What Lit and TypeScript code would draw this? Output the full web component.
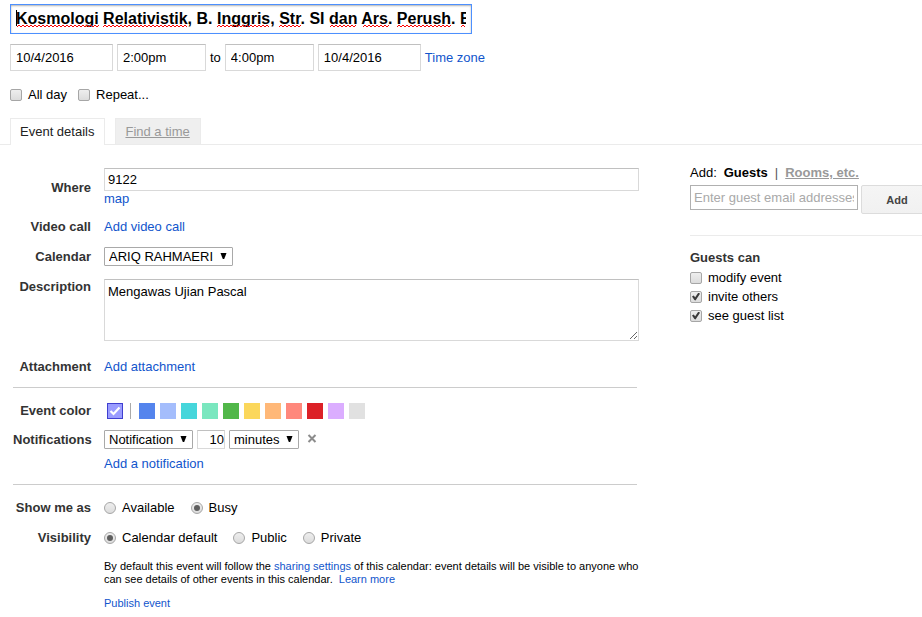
import { LitElement, html, css, svg } from "lit";
import { customElement, property } from "lit/decorators.js";
import { styleMap } from "lit/directives/style-map.js";

const colors = [
  ["Bold blue", "#5484ed"],
  ["Blue", "#a4bdfc"],
  ["Turquoise", "#46d6db"],
  ["Green", "#7ae7bf"],
  ["Bold green", "#51b749"],
  ["Yellow", "#fbd75b"],
  ["Orange", "#ffb878"],
  ["Red", "#ff887c"],
  ["Bold red", "#dc2127"],
  ["Purple", "#dbadff"],
  ["Gray", "#e1e1e1"],
];

/* Start and end of each misspelt word, measured from the start of the title. */
const misspelt = [
  [1, 83], [87, 172], [201, 253], [263, 285],
  [314, 341], [347, 373], [381, 436], [445, 450],
];

const squiggle = (from: number, to: number) => {
  let d = `M${from} 17`;
  for (let x = from + 2, up = true; x <= to; x += 2, up = !up) d += `L${x} ${up ? 15 : 17}`;
  return svg`<path d=${d} fill="none" stroke="#f00" stroke-width="1" />`;
};

const shared = css`
  * { box-sizing: border-box; }
  input, select, textarea, button {
    font: inherit;
    color: #000;
    margin: 0;
  }
  a { color: #15c; text-decoration: none; }
`;

@customElement("drop-down")
class DropDown extends LitElement {
  @property() name = "";
  @property({ type: Array }) options: string[] = [];

  static styles = [shared, css`
    :host { display: inline-grid; align-items: center; }
    .list {
      grid-area: 1 / 1;
      appearance: none;
      width: 100%;
      height: 19px;
      padding: 0 4px;
      border: 1px solid #a9a9a9;
      border-radius: 1px;
      background: #fff;
    }
    .arrow {
      grid-area: 1 / 1;
      justify-self: end;
      margin-right: 6px;
      pointer-events: none;
    }
  `];

  render() {
    return html`
      <select class="list" aria-label=${this.name}>
        ${this.options.map((o) => html`<option>${o}</option>`)}
      </select>
      <svg class="arrow" width="7" height="7" viewBox="0 0 7 7">
        <path d="M0.5 0H6.5L4.2 6H2.8Z" fill="#000" />
      </svg>
    `;
  }
}

@customElement("app-root")
class AppRoot extends LitElement {
  static styles = [shared, css`
    :host {
      display: block;
      overflow: hidden;
      padding: 4px 0 8px;
      background: #fff;
      color: #000;
      font: 13px/16px "Liberation Sans", Arial, sans-serif;
    }
    .title {
      position: relative;
      width: 462px;
      max-width: 100%;
      margin-left: 10px;
    }
    .title-box {
      display: block;
      width: 100%;
      height: 30px;
      padding: 0 5px;
      border: 1px solid #4d90fe;
      box-shadow: inset 0 1px 2px rgba(0, 0, 0, 0.3);
      font-size: 16px;
      font-weight: bold;
      outline: none;
    }
    .marks {
      position: absolute;
      left: 6px;
      top: 6px;
      pointer-events: none;
    }
    .when {
      display: flex;
      align-items: center;
      gap: 4px;
      margin: 10px 10px 0;
    }
    .box {
      border: 1px solid #d9d9d9;
      border-top-color: #c0c0c0;
      background: #fff;
    }
    .date, .time { height: 27px; padding: 0 5px; }
    .date { width: 103px; }
    .time { width: 89px; }
    .repeat { display: flex; gap: 11px; margin: 16px 10px 0; }
    .choice { display: flex; align-items: center; gap: 6px; }
    .tick, .radio {
      appearance: none;
      position: relative;
      flex: none;
      width: 12px;
      height: 12px;
      border: 1px solid #a6a6a6;
      background: linear-gradient(#eee, #dcdcdc);
    }
    .tick { border-radius: 2px; }
    .radio { border-radius: 50%; }
    .tick:checked::after {
      content: "";
      position: absolute;
      inset: 1px;
      background: #3a3a3a;
      clip-path: polygon(0 50%, 20% 38%, 40% 58%, 80% 0, 100% 16%, 44% 100%, 30% 94%);
    }
    .radio:checked::after {
      content: "";
      position: absolute;
      inset: 2px;
      border-radius: 50%;
      background: #5e5e5e;
    }
    .tabs {
      display: flex;
      gap: 10px;
      margin-top: 15px;
      padding-left: 10px;
      border-bottom: 1px solid #ebebeb;
    }
    .tab {
      height: 26px;
      padding: 5px 10px 5px 9px;
      border: 1px solid #ebebeb;
      border-bottom: 0;
      background: #efefef;
      color: #999;
      text-decoration: underline;
    }
    .tab.current {
      height: 27px;
      margin-bottom: -1px;
      background: #fff;
      color: #222;
      text-decoration: none;
    }
    .body {
      display: grid;
      grid-template-columns: minmax(0, 1fr) 232px;
      gap: 51px;
      padding-left: 13px;
    }
    .details { padding-top: 23px; }
    .row {
      display: grid;
      grid-template-columns: 78px minmax(0, 1fr);
      column-gap: 13px;
      align-items: center;
      margin-bottom: 12px;
    }
    .row.top { align-items: start; }
    .row.tight { margin-bottom: 7px; }
    .row.wide { margin-bottom: 18px; }
    .row.loose { margin-bottom: 14px; }
    .row.pick { margin-bottom: 13px; }
    .row.colors { margin-bottom: 11px; }
    .row.none { margin-bottom: 0; }
    .name {
      color: #333;
      font-weight: bold;
      text-align: right;
      white-space: nowrap;
    }
    .rule {
      height: 1px;
      margin: 0 2px 15px 0;
      border: 0;
      background: #ccc;
    }
    .where { display: block; width: 100%; height: 23px; padding: 0 3px; }
    .calendar { width: 129px; }
    .description {
      display: block;
      width: 100%;
      height: 62px;
      padding: 4px 3px;
      resize: vertical;
      outline: none;
    }
    .swatches { display: flex; gap: 5px; padding-left: 3px; }
    .swatch { appearance: none; width: 16px; height: 16px; }
    .own { position: relative; display: grid; }
    .own .swatch { grid-area: 1 / 1; border: 1px solid #3f3fd0; background: #9a9cff; }
    .own svg { grid-area: 1 / 1; z-index: 1; pointer-events: none; }
    .split { width: 1px; margin: 0 3px 0 2px; background: #aaa; }
    .alerts { display: flex; align-items: center; gap: 4px; }
    .kind { width: 89px; }
    .unit { width: 70px; }
    .amount { width: 28px; height: 19px; padding: 0; text-align: right; }
    .remove {
      display: grid;
      width: 18px;
      height: 18px;
      padding: 3px 4px;
      border: 0;
      background: none;
    }
    .radios { display: flex; gap: 16px; }
    .note { margin: 0 0 11px; font-size: 11px; line-height: 13px; }
    .publish { display: block; font-size: 11px; line-height: 13px; }
    .more { margin-left: 3px; }
    .guests { padding-top: 20px; }
    .kinds { display: flex; gap: 7px; white-space: nowrap; }
    .rooms { color: #999; font-weight: bold; text-decoration: underline; }
    .bar { color: #555; }
    .invite { display: flex; align-items: start; gap: 3px; margin-top: 4px; }
    .email {
      flex: none;
      width: 168px;
      height: 25px;
      padding: 0 3px;
      border: 1px solid #b0b0b0;
    }
    .email::placeholder { color: #a9a9a9; opacity: 1; }
    .add {
      flex: none;
      width: 72px;
      height: 29px;
      border: 1px solid #dcdcdc;
      border-radius: 2px;
      background: linear-gradient(#f5f5f5, #f1f1f1);
      color: #444;
      font-size: 11px;
      font-weight: bold;
    }
    .thin { height: 1px; margin: 21px 0 14px; border: 0; background: #ebebeb; }
    .rights { margin: 0; padding: 0; border: 0; }
    .legend { padding: 0; margin-bottom: 2px; color: #333; font-weight: bold; }
    .rights .choice { height: 19px; }
  `];

  tick(text: string, checked = false) {
    return html`<label class="choice"><input class="tick" type="checkbox" .checked=${checked} />${text}</label>`;
  }

  radio(group: string, text: string, checked = false) {
    return html`<label class="choice"><input class="radio" type="radio" name=${group} .checked=${checked} />${text}</label>`;
  }

  render() {
    return html`
      <div class="title">
        <input class="title-box" type="text" aria-label="Title" spellcheck="false"
          value="Kosmologi Relativistik, B. Inggris, Str. SI dan Ars. Perush. Bisnis" />
        <svg class="marks" width="450" height="20" aria-hidden="true">
          <path d="M0.5 0V16" stroke="#000" />
          ${misspelt.map(([from, to]) => squiggle(from, to))}
        </svg>
      </div>
      <div class="when">
        <input class="box date" type="text" aria-label="Start date" value="10/4/2016" />
        <input class="box time" type="text" aria-label="Start time" value="2:00pm" />
        <span>to</span>
        <input class="box time" type="text" aria-label="End time" value="4:00pm" />
        <input class="box date" type="text" aria-label="End date" value="10/4/2016" />
        <a href="#">Time zone</a>
      </div>
      <div class="repeat">${this.tick("All day")}${this.tick("Repeat...")}</div>
      <nav class="tabs">
        <a class="tab current" href="#">Event details</a>
        <a class="tab" href="#">Find a time</a>
      </nav>
      <div class="body">
        <main class="details">
          <div class="row">
            <label class="name" for="where">Where</label>
            <div>
              <input class="box where" id="where" type="text" value="9122" />
              <a href="#">map</a>
            </div>
          </div>
          <div class="row">
            <span class="name">Video call</span>
            <a href="#">Add video call</a>
          </div>
          <div class="row pick">
            <span class="name">Calendar</span>
            <drop-down class="calendar" name="Calendar" .options=${["ARIQ RAHMAERI"]}></drop-down>
          </div>
          <div class="row top wide">
            <label class="name" for="description">Description</label>
            <textarea class="box description" id="description" .value=${"Mengawas Ujian Pascal"}></textarea>
          </div>
          <div class="row">
            <span class="name">Attachment</span>
            <a href="#">Add attachment</a>
          </div>
          <hr class="rule" />
          <div class="row colors">
            <span class="name">Event color</span>
            <div class="swatches">
              <div class="own">
                <input class="swatch" type="radio" name="color" aria-label="Calendar color" checked />
                <svg width="16" height="16" viewBox="0 0 16 16">
                  <path d="M3.5 8L6.5 11L12.5 4.5" fill="none" stroke="#fff" stroke-width="2.2" />
                </svg>
              </div>
              <span class="split"></span>
              ${colors.map(([name, value]) => html`
                <input class="swatch" type="radio" name="color" aria-label=${name}
                  style=${styleMap({ background: value })} />`)}
            </div>
          </div>
          <div class="row tight">
            <span class="name">Notifications</span>
            <div class="alerts">
              <drop-down class="kind" name="Kind" .options=${["Notification", "Email"]}></drop-down>
              <input class="box amount" type="text" aria-label="Amount" value="10" />
              <drop-down class="unit" name="Unit" .options=${["minutes", "hours", "days"]}></drop-down>
              <button class="remove" aria-label="Remove notification">
                <svg width="10" height="10" viewBox="0 0 10 10">
                  <path d="M1.5 1L8.5 8M8.5 1L1.5 8" stroke="#8c8c8c" stroke-width="2" />
                </svg>
              </button>
            </div>
          </div>
          <div class="row">
            <span></span>
            <a href="#">Add a notification</a>
          </div>
          <hr class="rule" />
          <div class="row loose">
            <span class="name">Show me as</span>
            <div class="radios" role="radiogroup" aria-label="Show me as">
              ${this.radio("show", "Available")}${this.radio("show", "Busy", true)}
            </div>
          </div>
          <div class="row loose">
            <span class="name">Visibility</span>
            <div class="radios" role="radiogroup" aria-label="Visibility">
              ${this.radio("visibility", "Calendar default", true)}${this.radio("visibility", "Public")}${this.radio("visibility", "Private")}
            </div>
          </div>
          <div class="row none">
            <span></span>
            <div>
              <p class="note">By default this event will follow the <a href="#">sharing settings</a> of this calendar: event details will be visible to anyone who can see details of other events in this calendar. <a class="more" href="#">Learn more</a></p>
              <a class="publish" href="#">Publish event</a>
            </div>
          </div>
        </main>
        <aside class="guests">
          <div class="kinds">
            <span>Add:</span><b>Guests</b><span class="bar">|</span><a class="rooms" href="#">Rooms, etc.</a>
          </div>
          <div class="invite">
            <input class="email" type="text" aria-label="Guest email addresses" placeholder="Enter guest email addresses" />
            <button class="add">Add</button>
          </div>
          <hr class="thin" />
          <fieldset class="rights">
            <legend class="legend">Guests can</legend>
            ${this.tick("modify event")}${this.tick("invite others", true)}${this.tick("see guest list", true)}
          </fieldset>
        </aside>
      </div>
    `;
  }
}
